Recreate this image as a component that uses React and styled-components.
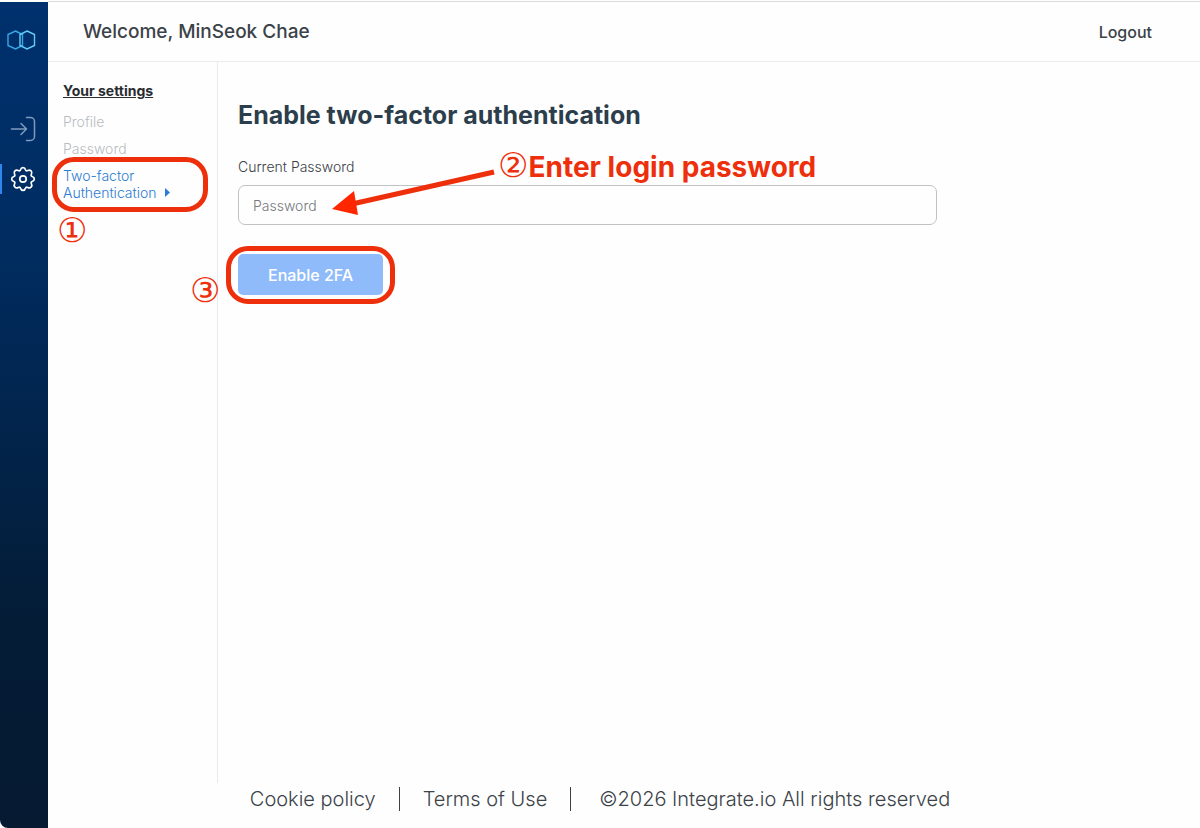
import React from 'react';
import styled, { createGlobalStyle } from 'styled-components';

const GlobalStyle = createGlobalStyle`
  * {
    box-sizing: border-box;
  }
  body {
    margin: 0;
    background: #fefefe;
    color: #3b4248;
    font-family: Inter, 'Liberation Sans', sans-serif;
  }
  a {
    color: inherit;
    text-decoration: none;
  }
`;

const PageStyle = styled.div`
  display: flex;
  min-height: 100vh;
  padding-top: 1px;
`;

const RailStyle = styled.nav`
  display: flex;
  flex-direction: column;
  flex: 0 0 48px;
  margin-top: 1px;
  padding-top: 23px;
  background: linear-gradient(#00316e, #002c60 30%, #041c36 75%, #061a32);
  border-bottom-left-radius: 8px;
`;

const RailLink = styled.a`
  display: flex;
  align-items: center;
  height: 30px;
  padding-left: ${(props) => (props.$logo ? '7px' : '8px')};
  margin-bottom: ${(props) => (props.$logo ? '59px' : '20px')};
  color: ${(props) => (props.$active ? '#fff' : '#7e9cbd')};
  border-left: 2px solid ${(props) => (props.$active ? '#2f86ee' : 'transparent')};
  ${(props) => props.$logo && 'border-left: 0;'}
`;

const MainStyle = styled.div`
  display: flex;
  flex: 1;
  flex-direction: column;
  border-top: 1px solid #d9dddf;
`;

const HeaderStyle = styled.header`
  display: flex;
  align-items: center;
  justify-content: space-between;
  height: 60px;
  padding: 0 48px 0 35px;
  border-bottom: 1px solid #e9eced;
`;

const Welcome = styled.div`
  font-size: 19px;
  font-weight: 500;
  line-height: 24px;
`;

const LogoutLink = styled.a`
  font-size: 16px;
  font-weight: 500;
`;

const BodyStyle = styled.div`
  display: flex;
  flex: 1;
`;

const SideStyle = styled.aside`
  flex: 0 0 170px;
  padding: 20px 15px;
  border-right: 1px solid #e9eced;
  h2 {
    margin: 0 0 13px;
    color: #2a2d30;
    font-size: 14px;
    font-weight: 700;
    line-height: 18px;
    text-decoration: underline;
  }
  ul {
    display: flex;
    flex-direction: column;
    gap: 10px;
    margin: 0;
    padding: 0;
    list-style: none;
  }
  li {
    position: relative;
  }
`;

const SideLink = styled.a`
  display: block;
  color: ${(props) => (props.$active ? '#2b7cd3' : '#b9bcbf')};
  font-size: 14px;
  font-weight: 300;
  line-height: 17px;
  svg {
    margin-left: 8px;
    vertical-align: 1px;
  }
`;

const ContentStyle = styled.main`
  flex: 1;
  padding: 36px 20px;
  h1 {
    margin: 0 0 26px;
    color: #2c3e4c;
    font-size: 25px;
    font-weight: 700;
    line-height: 34px;
  }
`;

const FieldStyle = styled.div`
  position: relative;
  max-width: 699px;
  margin-bottom: 29px;
  label {
    display: block;
    margin-bottom: 9px;
    color: #3b4045;
    font-size: 14px;
    font-weight: 300;
    line-height: 18px;
  }
`;

const InputStyle = styled.input`
  display: block;
  width: 100%;
  height: 40px;
  padding: 0 14px;
  border: 1px solid #bfc1c4;
  border-radius: 7px;
  background: transparent;
  font: 300 14px Inter, sans-serif;
  &::placeholder {
    color: #75787b;
    opacity: 1;
  }
`;

const ActionStyle = styled.div`
  position: relative;
  width: fit-content;
`;

const EnableBtn = styled.button`
  display: block;
  height: 41px;
  padding: 0 30px;
  border: 0;
  border-radius: 5px;
  background: #8fbbfa;
  color: #fff;
  font: 500 16px Inter, sans-serif;
`;

const FooterStyle = styled.footer`
  display: flex;
  justify-content: center;
  padding: 4px 48px 17px 0;
  font-size: 20px;
  font-weight: 300;
  line-height: 24px;
  > * + * {
    margin-left: 23px;
    padding-left: 23px;
    border-left: 1px solid #3b4248;
  }
  > :last-child {
    padding-left: 28px;
  }
`;

/* tutorial marks, drawn over the page */
const Ring = styled.span`
  position: absolute;
  inset: ${(props) => props.$inset};
  border: 5px solid #ee2f0c;
  border-radius: 22px;
  pointer-events: none;
`;

const Mark = styled.span`
  position: absolute;
  top: ${(props) => props.$top};
  left: ${(props) => props.$left};
  color: #ee2f0c;
  font-size: 28px;
  font-weight: 700;
  line-height: 34px;
  white-space: nowrap;
  pointer-events: none;
`;

const Digit = styled.span`
  font-family: 'DejaVu Sans', sans-serif;
  font-size: 34px;
  font-weight: 400;
`;

const ArrowStyle = styled.svg`
  position: absolute;
  top: 8px;
  left: 94px;
  pointer-events: none;
`;

function LogoIcon() {
  return (
    <svg width="29" height="20" viewBox="0 0 29 20" fill="none" strokeWidth="1.4">
      <path d="M8.500 1l7 3.500v11l-7 3.500L1 15.500v-11z" stroke="#35a8e6" />
      <path d="M20 1l7.500 3.500v11L20 19l-7-3.500v-11z" stroke="#62cdf8" />
    </svg>
  );
}

function EnterIcon() {
  return (
    <svg width="26" height="26" viewBox="0 0 26 26" fill="none" stroke="currentColor" strokeWidth="1.5" strokeLinecap="round" strokeLinejoin="round">
      <path d="M1.500 13h15M11 7.500l5.500 5.500L11 18.500M16.500 1.500h4a4 4 0 0 1 4 4v15a4 4 0 0 1-4 4h-4" />
    </svg>
  );
}

function GearIcon() {
  return (
    <svg width="26" height="26" viewBox="0 0 26 26" fill="none" stroke="currentColor" strokeWidth="1.7" strokeLinejoin="round">
      <path d="M10.500 3.800C11.300 1 14.700 1 15.500 3.800Q16.100 5.400 17.700 4.600C20.300 3.200 22.800 5.700 21.400 8.300Q20.600 9.900 22.200 10.500C25 11.300 25 14.700 22.200 15.500Q20.600 16.100 21.400 17.700C22.800 20.300 20.300 22.800 17.700 21.400Q16.100 20.600 15.500 22.200C14.700 25 11.300 25 10.500 22.200Q9.900 20.600 8.300 21.400C5.700 22.800 3.200 20.300 4.600 17.700Q5.400 16.100 3.800 15.500C1 14.700 1 11.300 3.800 10.500Q5.400 9.900 4.600 8.300C3.200 5.700 5.700 3.200 8.300 4.600Q9.900 5.400 10.500 3.800z" />
      <circle cx="13" cy="13" r="3.200" />
    </svg>
  );
}

function App() {
  return (
    <>
      <GlobalStyle />
      <PageStyle>
        <RailStyle>
          <RailLink href="#home" $logo aria-label="Home">
            <LogoIcon />
          </RailLink>
          <RailLink href="#connections" aria-label="Connections">
            <EnterIcon />
          </RailLink>
          <RailLink href="#settings" $active aria-label="Settings">
            <GearIcon />
          </RailLink>
        </RailStyle>
        <MainStyle>
          <HeaderStyle>
            <Welcome>Welcome, MinSeok Chae</Welcome>
            <LogoutLink href="#logout">Logout</LogoutLink>
          </HeaderStyle>
          <BodyStyle>
            <SideStyle>
              <h2>Your settings</h2>
              <ul>
                <li>
                  <SideLink href="#profile">Profile</SideLink>
                </li>
                <li>
                  <SideLink href="#password">Password</SideLink>
                </li>
                <li>
                  <SideLink href="#two-factor" $active>
                    Two-factor Authentication
                    <svg width="5" height="9" viewBox="0 0 5 9" fill="currentColor">
                      <path d="M0 0l5 4.500L0 9z" />
                    </svg>
                  </SideLink>
                  <Ring $inset="-10px -6px -11px -11px" />
                  <Mark $top="46px" $left="-6px">
                    <Digit>①</Digit>
                  </Mark>
                </li>
              </ul>
            </SideStyle>
            <ContentStyle>
              <h1>Enable two-factor authentication</h1>
              <FieldStyle>
                <label htmlFor="current-password">Current Password</label>
                <InputStyle id="current-password" type="password" placeholder="Password" />
                <ArrowStyle width="164" height="50" viewBox="0 0 164 50">
                  <path d="M20 38L162 6" stroke="#ee2f0c" strokeWidth="5" />
                  <path d="M0 43L22 25L26 49z" fill="#ff2600" />
                </ArrowStyle>
                <Mark $top="-10px" $left="260px">
                  <Digit>②</Digit>Enter login password
                </Mark>
              </FieldStyle>
              <ActionStyle>
                <EnableBtn type="button">Enable 2FA</EnableBtn>
                <Ring $inset="-8px -12px -9px -12px" />
                <Mark $top="19px" $left="-48px">
                  <Digit>③</Digit>
                </Mark>
              </ActionStyle>
            </ContentStyle>
          </BodyStyle>
          <FooterStyle>
            <a href="#cookies">Cookie policy</a>
            <a href="#terms">Terms of Use</a>
            <span>©2026 Integrate.io All rights reserved</span>
          </FooterStyle>
        </MainStyle>
      </PageStyle>
    </>
  );
}

export default App;
